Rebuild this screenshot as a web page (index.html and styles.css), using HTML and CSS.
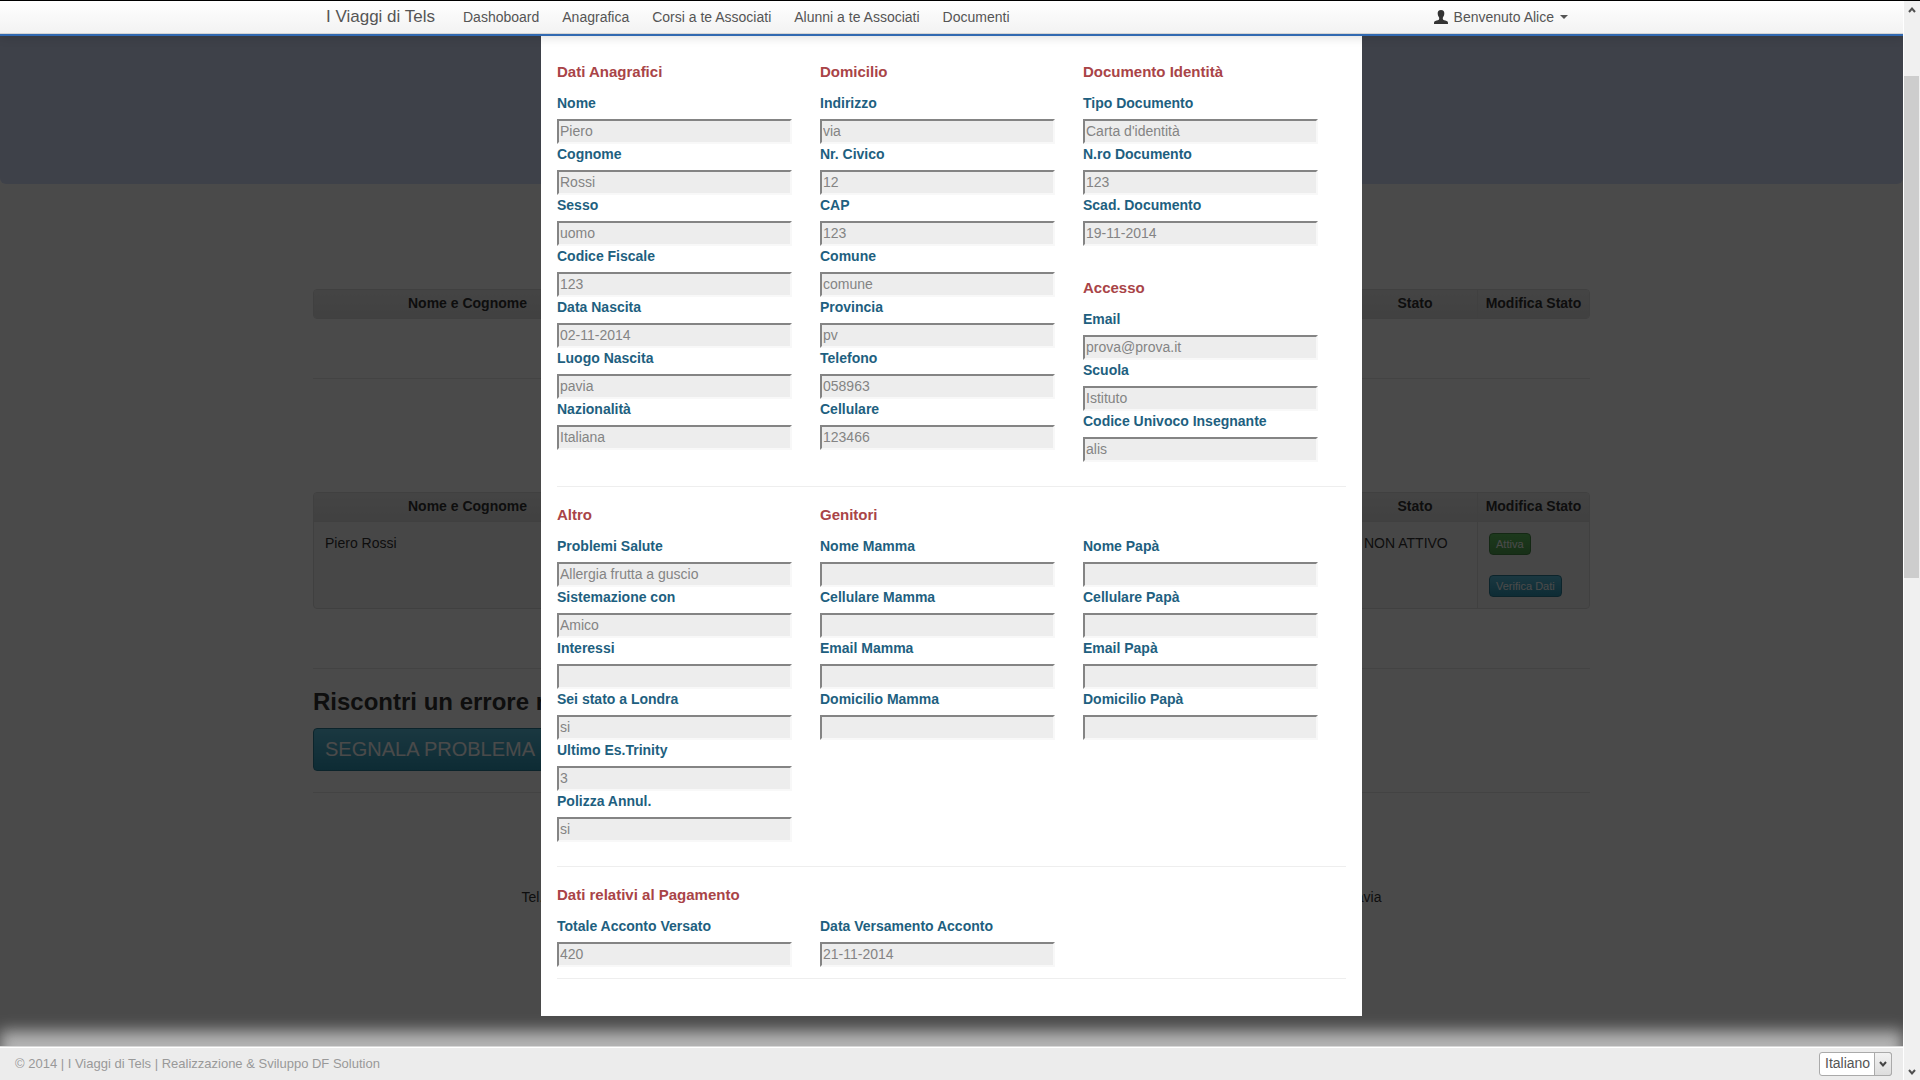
FILE: index.html
```html
<!DOCTYPE html>
<html lang="it">
<head>
<meta charset="utf-8">
<title>I Viaggi di Tels</title>
<link rel="stylesheet" href="styles.css">
</head>
<body>
<div class="window">
  <div class="view">
    <header class="navbar">
      <a class="brand" href="#">I Viaggi di Tels</a>
      <nav class="nav">
        <a href="#">Dashoboard</a>
        <a href="#">Anagrafica</a>
        <a href="#">Corsi a te Associati</a>
        <a href="#">Alunni a te Associati</a>
        <a href="#">Documenti</a>
      </nav>
      <button class="user" type="button">
        <svg width="14" height="14" viewBox="0 0 14 14" aria-hidden="true"><path d="M7 0C4.600 0 3.500 1.400 3.700 3.700C3.800 5.500 4.600 6.600 5.100 7.500C5.300 8.400 5.300 9.200 4.800 9.800C3.800 10.400 1.300 10.800.5 11.500C.1 11.900 0 12.600 0 14H14C14 12.600 13.900 11.900 13.500 11.500C12.700 10.800 10.200 10.400 9.200 9.800C8.700 9.200 8.700 8.400 8.900 7.500C9.400 6.600 10.200 5.500 10.300 3.700C10.500 1.400 9.400 0 7 0Z" fill="#333"/></svg>
        <span>Benvenuto Alice</span>
        <i class="caret"></i>
      </button>
    </header>

    <div class="stage">
      <main class="page">
        <div class="hero"></div>
        <div class="container">
          <table class="list list-empty">
            <colgroup><col class="c-name"><col><col class="c-state"><col class="c-action"></colgroup>
            <thead><tr><th>Nome e Cognome</th><th></th><th>Stato</th><th>Modifica Stato</th></tr></thead>
          </table>
          <hr>
          <table class="list list-students">
            <colgroup><col class="c-name"><col><col class="c-state"><col class="c-action"></colgroup>
            <thead><tr><th>Nome e Cognome</th><th></th><th>Stato</th><th>Modifica Stato</th></tr></thead>
            <tbody><tr>
              <td>Piero Rossi</td><td></td><td>NON ATTIVO</td>
              <td><div class="actions">
                <button class="btn btn-success" type="button">Attiva</button>
                <button class="btn btn-info" type="button">Verifica Dati</button>
              </div></td>
            </tr></tbody>
          </table>
          <hr>
          <h3>Riscontri un errore n</h3>
          <button class="btn-large btn-info" type="button">SEGNALA PROBLEMA</button>
          <hr>
          <p class="contacts"><span>Tel.</span><span>Pavia</span></p>
        </div>
      </main>
      <div class="backdrop"></div>

      <form class="modal">
        <section class="cols">
          <div class="col">
            <h4>Dati Anagrafici</h4>
            <label for="nome">Nome</label><input id="nome" value="Piero" disabled>
            <label for="cognome">Cognome</label><input id="cognome" value="Rossi" disabled>
            <label for="sesso">Sesso</label><input id="sesso" value="uomo" disabled>
            <label for="cf">Codice Fiscale</label><input id="cf" value="123" disabled>
            <label for="nascita">Data Nascita</label><input id="nascita" value="02-11-2014" disabled>
            <label for="luogo">Luogo Nascita</label><input id="luogo" value="pavia" disabled>
            <label for="naz">Nazionalità</label><input id="naz" value="Italiana" disabled>
          </div>
          <div class="col">
            <h4>Domicilio</h4>
            <label for="indirizzo">Indirizzo</label><input id="indirizzo" value="via" disabled>
            <label for="civico">Nr. Civico</label><input id="civico" value="12" disabled>
            <label for="cap">CAP</label><input id="cap" value="123" disabled>
            <label for="comune">Comune</label><input id="comune" value="comune" disabled>
            <label for="provincia">Provincia</label><input id="provincia" value="pv" disabled>
            <label for="telefono">Telefono</label><input id="telefono" value="058963" disabled>
            <label for="cellulare">Cellulare</label><input id="cellulare" value="123466" disabled>
          </div>
          <div class="col">
            <h4>Documento Identità</h4>
            <label for="tipodoc">Tipo Documento</label><input id="tipodoc" value="Carta d'identità" disabled>
            <label for="nrodoc">N.ro Documento</label><input id="nrodoc" value="123" disabled>
            <label for="scaddoc">Scad. Documento</label><input id="scaddoc" value="19-11-2014" disabled>
            <h4 class="second">Accesso</h4>
            <label for="email">Email</label><input id="email" value="prova@prova.it" disabled>
            <label for="scuola">Scuola</label><input id="scuola" value="Istituto" disabled>
            <label for="codice">Codice Univoco Insegnante</label><input id="codice" value="alis" disabled>
          </div>
        </section>
        <section class="cols">
          <div class="col">
            <h4>Altro</h4>
            <label for="salute">Problemi Salute</label><input id="salute" value="Allergia frutta a guscio" disabled>
            <label for="sistemazione">Sistemazione con</label><input id="sistemazione" value="Amico" disabled>
            <label for="interessi">Interessi</label><input id="interessi" disabled>
            <label for="londra">Sei stato a Londra</label><input id="londra" value="si" disabled>
            <label for="trinity">Ultimo Es.Trinity</label><input id="trinity" value="3" disabled>
            <label for="polizza">Polizza Annul.</label><input id="polizza" value="si" disabled>
          </div>
          <div class="col wide">
            <h4>Genitori</h4>
            <div class="parents">
              <div class="col">
                <label for="nmamma">Nome Mamma</label><input id="nmamma" disabled>
                <label for="cmamma">Cellulare Mamma</label><input id="cmamma" disabled>
                <label for="emamma">Email Mamma</label><input id="emamma" disabled>
                <label for="dmamma">Domicilio Mamma</label><input id="dmamma" disabled>
              </div>
              <div class="col">
                <label for="npapa">Nome Papà</label><input id="npapa" disabled>
                <label for="cpapa">Cellulare Papà</label><input id="cpapa" disabled>
                <label for="epapa">Email Papà</label><input id="epapa" disabled>
                <label for="dpapa">Domicilio Papà</label><input id="dpapa" disabled>
              </div>
            </div>
          </div>
        </section>
        <section class="payment">
          <h4>Dati relativi al Pagamento</h4>
          <div class="cols">
            <div class="col"><label for="acconto">Totale Acconto Versato</label><input id="acconto" value="420" disabled></div>
            <div class="col"><label for="versamento">Data Versamento Acconto</label><input id="versamento" value="21-11-2014" disabled></div>
          </div>
        </section>
      </form>
    </div>

    <footer class="footer">
      <span>© 2014 | I Viaggi di Tels | Realizzazione &amp; Sviluppo DF Solution</span>
      <div class="lang">
        <select aria-label="Lingua"><option>Italiano</option></select>
        <span class="lang-arrow"><svg width="8" height="8" viewBox="0 0 8 8" aria-hidden="true"><path d="M1 2L4 5.500L7 2" fill="none" stroke="#444" stroke-width="2"/></svg></span>
      </div>
    </footer>
  </div>

  <div class="scrollbar" aria-hidden="true">
    <svg width="8" height="8" viewBox="0 0 8 8"><path d="M1 6L4 2.500L7 6" fill="none" stroke="#505050" stroke-width="2"/></svg>
    <div class="track"><div class="thumb"></div></div>
    <svg width="8" height="8" viewBox="0 0 8 8"><path d="M1 2L4 5.500L7 2" fill="none" stroke="#505050" stroke-width="2"/></svg>
  </div>
</div>
</body>
</html>
```
FILE: styles.css
```css
* { box-sizing: border-box; }

body {
  margin: 0;
  font: 14px/20px "Liberation Sans", Arial, sans-serif;
  color: #333;
}

a { color: inherit; text-decoration: none; }
h3, h4, p { margin: 0; }
button, input, select { font: inherit; }

.window {
  display: flex;
  height: 100vh;
  border-top: 1px solid #000;
  overflow: hidden;
}

.view {
  flex: 1;
  min-width: 0;
  display: flex;
  flex-direction: column;
}

/* Top bar */
.navbar {
  position: relative;
  z-index: 2;
  flex: none;
  display: flex;
  align-items: center;
  height: 35px;
  padding: 0 335px 2px 326px;
  color: #555;
  background: linear-gradient(#fff, #f2f2f2);
  border-bottom: 2px solid #3169b1;
  box-shadow: inset 0 -1px #d4d4d4, 0 1px 10px rgba(0, 0, 0, .15);
}
.brand { font-size: 17px; margin-right: 28px; }
.nav { display: flex; gap: 23px; flex: 1; }
.user {
  display: flex;
  align-items: center;
  gap: 6px;
  padding: 0;
  border: 0;
  background: none;
  color: #555;
}
.caret {
  border: 4px solid transparent;
  border-top-color: #555;
  border-bottom: 0;
}

/* Page and dialog share one grid cell */
.stage {
  flex: 1;
  min-height: 0;
  display: grid;
  overflow: hidden;
}
.stage > * { grid-area: 1 / 1; }

.hero {
  height: 148px;
  background: #d6e0fc;
  border-radius: 0 0 6px 6px;
}
.container { padding: 105px 313px 0; }
.container hr {
  margin: 0;
  border: 0;
  border-top: 1px solid #e6e6e6;
}

.list {
  width: 100%;
  table-layout: fixed;
  border: 1px solid #ddd;
  border-radius: 4px;
  border-spacing: 0;
  background: #f5f5f5;
  overflow: hidden;
}
.c-name { width: 307px; }
.c-state { width: 124px; }
.c-action { width: 112px; }
.list th {
  height: 28px;
  padding: 0 0 2px;
  background: linear-gradient(#ebebeb, #dedede);
}
.list td {
  padding: 11px;
  vertical-align: top;
  border-top: 1px solid #ddd;
}
.list td:nth-child(3) { white-space: nowrap; }
.list th:last-child, .list td:last-child { border-left: 1px solid #ddd; }
.list-empty { margin-bottom: 59px; }
.list-students { margin: 113px 0 59px; }
.actions {
  display: flex;
  flex-direction: column;
  align-items: flex-start;
  gap: 20px;
}
.btn {
  height: 22px;
  padding: 0 6px;
  border: 1px solid #458a45;
  border-radius: 4px;
  font-size: 11px;
  line-height: 18px;
  color: #fff;
}
.btn-success { background: linear-gradient(#62c462, #51a351); }
.btn-info { border-color: #2a7d96; background: linear-gradient(#5bc0de, #2f96b4); }
.container h3 {
  margin: 15px 0 9px;
  font-size: 24px;
  line-height: 35px;
}
.btn-large {
  display: block;
  height: 43px;
  margin-bottom: 21px;
  padding: 0 11px 2px;
  border: 1px solid #2a7d96;
  border-radius: 4px;
  font-size: 20px;
  color: #fff;
}
.contacts {
  display: flex;
  justify-content: space-between;
  max-width: 860px;
  margin: 94px auto 0;
}

.backdrop { background: rgba(0, 0, 0, .71); }

/* Student data dialog */
.modal {
  justify-self: center;
  align-self: start;
  width: 821px;
  max-width: 100%;
  padding: 26px 16px 37px;
  background: #fff;
}
.modal section {
  margin-bottom: 18px;
  padding-bottom: 24px;
  border-bottom: 1px solid #eee;
}
.modal .payment { margin: 0; padding-bottom: 11px; }
.cols { display: grid; grid-template-columns: repeat(3, 1fr); }
.parents { display: grid; grid-template-columns: repeat(2, 1fr); }
.wide { grid-column: span 2; }
h4 {
  margin-bottom: 11px;
  font-size: 15px;
  color: #a94447;
}
.second { margin-top: 32px; }
label {
  display: block;
  margin-bottom: 6px;
  font-weight: bold;
  color: #1e5f80;
}
.modal input {
  display: block;
  width: 235px;
  max-width: 100%;
  height: 25px;
  padding: 0 1px 2px;
  border: 2px solid;
  border-color: #848484 #f8f8f8 #f8f8f8 #848484;
  background: #ededed;
  color: #848484;
}

/* Bottom bar */
.footer {
  position: relative;
  flex: none;
  display: flex;
  align-items: center;
  justify-content: space-between;
  height: 34px;
  padding: 0 11px 0 15px;
  font-size: 13px;
  color: #999;
  background: #ececec;
  border-top: 1px solid #d8d8d8;
  box-shadow: inset 0 1px #fff, 0 -15px 15px #b4b4b4;
}
.lang { display: grid; font-size: 14px; }
.lang > * { grid-area: 1 / 1; }
.lang select {
  width: 73px;
  height: 24px;
  padding: 0 0 2px 5px;
  border: 1px solid #aaa;
  border-radius: 3px;
  background: #fff;
  color: #555;
  appearance: none;
}
.lang-arrow {
  justify-self: end;
  display: grid;
  place-items: center;
  width: 18px;
  border: 1px solid #aaa;
  border-radius: 0 3px 3px 0;
  background: linear-gradient(#f2f2f2, #ddd);
  pointer-events: none;
}

/* Scroll bar */
.scrollbar {
  position: relative;
  z-index: 3;
  display: flex;
  flex-direction: column;
  align-items: center;
  width: 17px;
  padding: 5px 0 4px;
  background: #f0f0f0;
  border-left: 1px solid #fff;
}
.track { flex: 1; width: 100%; padding-top: 62px; }
.thumb { height: calc(51% - 4px); margin-right: 1px; background: #cdcdcd; }
```
